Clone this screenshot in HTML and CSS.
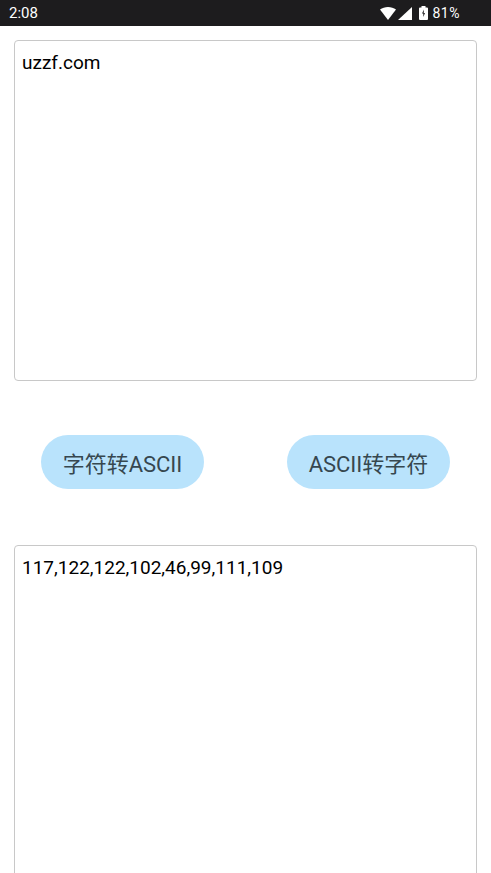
FILE: index.html
```html
<!DOCTYPE html>
<html lang="zh-CN">
<head>
    <meta charset="UTF-8">
    <meta name="viewport" content="width=device-width, initial-scale=1.0">
    <title>ASCII</title>
    <link rel="stylesheet" href="styles.css">
</head>
<body>
    <!-- Status bar -->
    <div class="status-bar">
        <span class="status-time">2:08</span>
        <div class="status-icons">
            <svg class="icon-wifi" width="16" height="13" viewBox="0 0 16 13"><path d="M0 2.6C2.2 0.9 5 0 8 0s5.800.9 8 2.600L8 13z" fill="#fff"/></svg>
            <svg class="icon-signal" width="14" height="13" viewBox="0 0 14 13"><path d="M14 0v13H0z" fill="#fff"/></svg>
            <svg class="icon-battery" width="9" height="14" viewBox="0 0 9 14"><path d="M2.500 0h4v1.500H8a1 1 0 0 1 1 1V13a1 1 0 0 1-1 1H1a1 1 0 0 1-1-1V2.500a1 1 0 0 1 1-1h1.500z" fill="#fff"/><path d="M5 3.500L3 7.500h1.300V11L6 7h-1.300z" fill="#1d1c1e"/></svg>
            <span class="status-percent">81%</span>
        </div>
    </div>

    <!-- Main Content -->
    <div class="main-content">
        <div class="text-box text-box-top">uzzf.com</div>

        <div class="button-row">
            <button type="button" class="convert-btn">字符转ASCII</button>
            <button type="button" class="convert-btn">ASCII转字符</button>
        </div>

        <div class="text-box text-box-bottom">117,122,122,102,46,99,111,109</div>
    </div>
</body>
</html>
```

FILE: styles.css
```css
html, body {
    height: 100%;
}

body {
    font-family: Roboto, "Noto Sans CJK SC", sans-serif;
    background-color: #fff;
    margin: 0;
    padding: 0;
    overflow: hidden;
}

/* Status bar */
.status-bar {
    background-color: #1d1c1e;
    color: #fff;
    height: 26px;
    display: flex;
    justify-content: space-between;
    align-items: center;
    padding: 0 31px 0 9px;
    font-size: 15px;
}

.status-icons {
    display: flex;
    align-items: center;
}

.icon-signal {
    margin-left: 2px;
}

.icon-battery {
    margin-left: 7px;
}

.status-percent {
    margin-left: 5px;
    font-size: 14px;
    letter-spacing: 0.5px;
}

/* Main Content */
.main-content {
    padding: 14px 14px 0;
}

.text-box {
    box-sizing: border-box;
    border: 1px solid #c8c8c8;
    border-radius: 4px;
    padding: 11px 7px;
    font-size: 19px;
    line-height: 22px;
    color: #000;
}

.text-box-top {
    height: 341px;
}

.text-box-bottom {
    height: 360px;
}

.button-row {
    display: flex;
    justify-content: space-between;
    padding: 54px 27px 56px;
}

.convert-btn {
    width: 163px;
    height: 54px;
    border: none;
    border-radius: 27px;
    background-color: #b9e3fc;
    color: #36474f;
    font-family: inherit;
    font-size: 22px;
    padding: 0;
}
```
